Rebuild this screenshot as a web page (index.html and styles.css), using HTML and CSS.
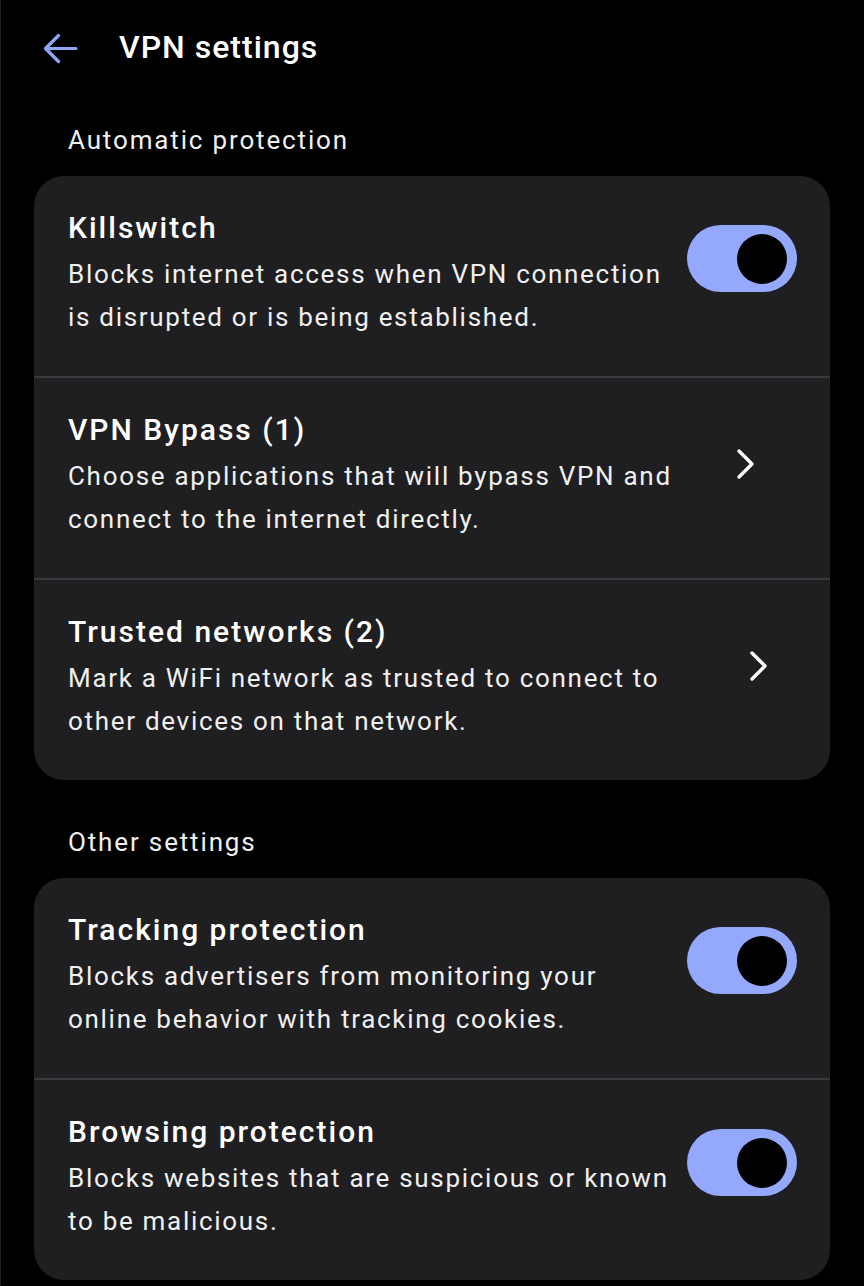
FILE: index.html
```html
<!DOCTYPE html>
<html lang="en">
<head>
<meta charset="utf-8">
<title>VPN settings</title>
<link rel="stylesheet" href="styles.css">
</head>
<body>
<div class="screen">
  <header class="topbar">
    <svg class="back" width="35" height="31" viewBox="0 0 35 31" aria-hidden="true">
      <path d="M33 15.5 H3 M15.5 2.5 L2.5 15.5 L15.5 28.5" fill="none" stroke="#8fa5f7" stroke-width="3.2" stroke-linecap="round" stroke-linejoin="round"/>
    </svg>
    <h1 class="title">VPN settings</h1>
  </header>

  <h2 class="section-label">Automatic protection</h2>
  <section class="card">
    <div class="row">
      <div class="text">
        <div class="row-title">Killswitch</div>
        <div class="row-desc">Blocks internet access when VPN connection<br>is disrupted or is being established.</div>
      </div>
      <div class="toggle"><span class="knob"></span></div>
    </div>
    <div class="divider"></div>
    <div class="row">
      <div class="text">
        <div class="row-title">VPN Bypass (1)</div>
        <div class="row-desc">Choose applications that will bypass VPN and<br>connect to the internet directly.</div>
      </div>
      <svg class="chevron chev-a" width="21" height="32" viewBox="0 0 21 32" aria-hidden="true">
        <path d="M3 3 L16 16 L3 29" fill="none" stroke="#ffffff" stroke-width="3.4" stroke-linecap="round" stroke-linejoin="round"/>
      </svg>
    </div>
    <div class="divider"></div>
    <div class="row">
      <div class="text">
        <div class="row-title">Trusted networks (2)</div>
        <div class="row-desc">Mark a WiFi network as trusted to connect to<br>other devices on that network.</div>
      </div>
      <svg class="chevron chev-b" width="21" height="32" viewBox="0 0 21 32" aria-hidden="true">
        <path d="M3 3 L16 16 L3 29" fill="none" stroke="#ffffff" stroke-width="3.4" stroke-linecap="round" stroke-linejoin="round"/>
      </svg>
    </div>
  </section>

  <h2 class="section-label second">Other settings</h2>
  <section class="card">
    <div class="row">
      <div class="text">
        <div class="row-title">Tracking protection</div>
        <div class="row-desc">Blocks advertisers from monitoring your<br>online behavior with tracking cookies.</div>
      </div>
      <div class="toggle"><span class="knob"></span></div>
    </div>
    <div class="divider"></div>
    <div class="row">
      <div class="text">
        <div class="row-title">Browsing protection</div>
        <div class="row-desc">Blocks websites that are suspicious or known<br>to be malicious.</div>
      </div>
      <div class="toggle"><span class="knob"></span></div>
    </div>
  </section>
</div>
</body>
</html>
```

FILE: styles.css
```css
html, body {
  margin: 0;
  padding: 0;
  background: #000000;
}

body {
  font-family: Roboto, "Liberation Sans", sans-serif;
  color: #ffffff;
}

.screen {
  width: 864px;
  height: 1286px;
  box-sizing: border-box;
  border-left: 1px solid #1f1f1f;
  overflow: hidden;
}

.topbar {
  display: flex;
  align-items: center;
  padding: 25px 0 0 42px;
  height: 44px;
}

.back {
  display: block;
  margin-top: 2px;
}

.title {
  margin: 0 0 0 41px;
  font-size: 32px;
  line-height: 44px;
  font-weight: 500;
  letter-spacing: 1px;
}

.section-label {
  margin: 53px 0 18px 67px;
  font-size: 26px;
  line-height: 36px;
  font-weight: 400;
  letter-spacing: 1.85px;
  color: #f0f0f0;
}

.section-label.second {
  margin-top: 44px;
}

.card {
  margin: 0 34px 0 33px;
  background: #1f1f21;
  border-radius: 30px;
  overflow: hidden;
}

.row {
  display: flex;
  align-items: flex-start;
  height: 200px;
  box-sizing: border-box;
  padding: 32px 33px 0 34px;
}

.text {
  flex: 1;
  min-width: 0;
  white-space: nowrap;
}

.row-title {
  font-size: 30px;
  line-height: 40px;
  font-weight: 500;
  letter-spacing: 2px;
  margin-bottom: 5px;
}

.row-desc {
  font-size: 26px;
  line-height: 43px;
  letter-spacing: 1.7px;
  color: #f0f0f0;
}

.divider {
  height: 2px;
  background: #3a3a3e;
}

.toggle {
  flex: none;
  width: 110px;
  height: 67px;
  margin-top: 17px;
  border-radius: 34px;
  background: #94a8fd;
  display: flex;
  align-items: center;
  justify-content: flex-end;
  padding-right: 10px;
  box-sizing: border-box;
}

.knob {
  width: 50px;
  height: 50px;
  border-radius: 50%;
  background: #000000;
}

.chevron {
  flex: none;
  display: block;
  margin-top: 38px;
}

.chev-a {
  margin-right: 40px;
}

.chev-b {
  margin-right: 27px;
}
```
